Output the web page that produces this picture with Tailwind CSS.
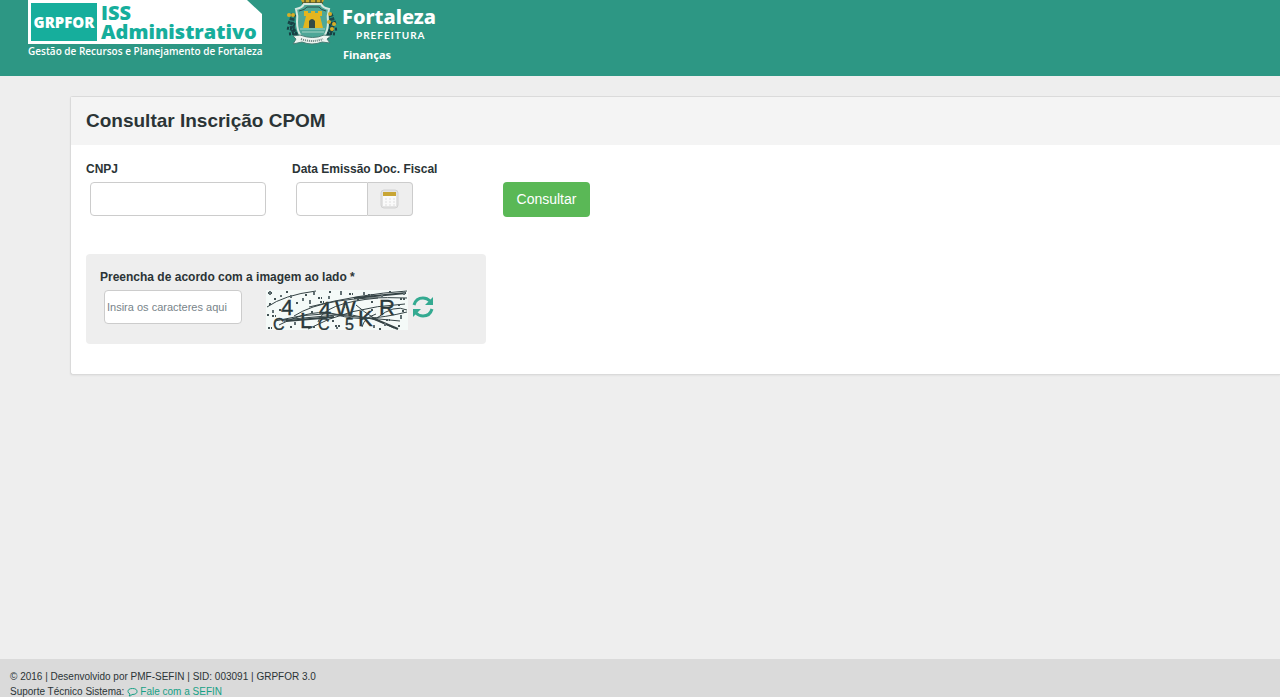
<!DOCTYPE html>
<html lang="pt-BR">
<head>
    <meta charset="UTF-8">
    <meta name="viewport" content="width=device-width, initial-scale=1.0">
    <title>Consultar Inscrição CPOM</title>
    <script src="https://cdn.jsdelivr.net/npm/@tailwindcss/browser@4"></script>
</head>
<body class="min-h-screen flex flex-col overflow-x-hidden bg-[#eeeeee] text-[#2b3436] font-['Liberation_Sans',Arial,sans-serif]">
    <header class="bg-[#2d9784] text-white h-[76px] flex items-start pl-7 gap-6 shrink-0">
        <!-- GRPFOR logo -->
        <div class="w-[234px] font-['Open_Sans',sans-serif]">
            <div class="flex h-11 bg-white p-[3px] gap-1 [clip-path:polygon(0_0,219px_0,100%_14px,100%_100%,0_100%)]">
                <div class="w-[66px] bg-[#16ae9c] flex items-center justify-center text-[15px] font-extrabold">GRPFOR</div>
                <div class="text-[#16ae9c] text-xl leading-[19px] font-extrabold">
                    <div>ISS</div>
                    <div>Administrativo</div>
                </div>
            </div>
            <p class="text-[10px] leading-[15px] font-semibold whitespace-nowrap">Gestão de Recursos e Planejamento de Fortaleza</p>
        </div>

        <!-- Prefeitura logo -->
        <div class="flex gap-1">
            <svg class="w-[52px] h-[46px] shrink-0" viewBox="0 0 52 46" fill="none">
                <path d="M15 0l2 4h19l2-4" fill="#c8a52c" />
                <path d="M16 3h21M19 0v4M24 0v4M30 0v4M35 0v4" stroke="#4f5630" stroke-width="1.500" />
                <path d="M8 14q-6 11 4 24M44 14q6 12-4 24" stroke="#1c4a4c" stroke-width="5" stroke-dasharray="3 1" />
                <path d="M2 22l7 3M1 28l8 2M3 34l8-1M49 34l-8-1M51 29l-8 1M50 22l-7 3" stroke="#173f43" stroke-width="3" stroke-dasharray="2 1" />
                <path d="M10 9q6-1 8-5h17q2 4 8 5-2 7-1 13 0 9-4 14-6 3-11 3-6 0-12-3-4-5-4-14 1-6-1-13z" fill="#4ea797" stroke="#d7e8df" stroke-width="2" />
                <path d="M13 11q6-1 8-4h12q2 3 7 4" stroke="#284d4b" />
                <path d="M14 29h25M16 32h22" stroke="#a5d2c4" />
                <path d="M17 28l3-12h-2v-5h4v2h3v-2h4v2h3v-2h4v5h-2l3 12z" fill="#e4b51e" />
                <path d="M23 28v-7q3-4 6 0v7z" fill="#344b45" />
                <g fill="#d7ae27">
                    <circle cx="3" cy="15" r="2" /><circle cx="7" cy="15" r="2" />
                    <circle cx="44" cy="14" r="2" /><circle cx="43" cy="22" r="2" />
                    <circle cx="48" cy="24" r="2" /><circle cx="46" cy="29" r="2" />
                </g>
                <path d="M7 36l7-1q13 5 24 0l7 1-4 3 3 4-8-1q-10 4-20 0l-9 2 3-5z" fill="#eef4f0" stroke="#497d75" />
                <path d="M15 39q11 4 22 0" stroke="#667f7b" stroke-width="2" stroke-dasharray="1 1" />
            </svg>
            <div>
                <p class="font-['Noto_Sans',sans-serif] font-extrabold text-xl leading-6 pt-[5px]">Fortaleza</p>
                <p class="font-['Lato',sans-serif] font-bold text-[10px] leading-3 tracking-widest pl-[14px]">PREFEITURA</p>
                <p class="font-['Noto_Sans',sans-serif] font-bold text-[11px] leading-4 pt-[6px] pl-px">Finanças</p>
            </div>
        </div>
    </header>

    <main class="grow pt-5 pl-[70px]">
        <form class="bg-white border border-r-0 border-[#dadada] rounded-l-[3px] shadow-xs">
            <div class="bg-[#f4f4f4] h-12 px-[15px] flex items-center">
                <h1 class="text-[19px] leading-6 font-bold">Consultar Inscrição CPOM</h1>
            </div>

            <div class="px-[15px] pt-4 pb-[30px]">
                <div class="flex items-start">
                    <div class="w-[206px]">
                        <label for="cnpj" class="block text-[12px] leading-4 font-bold">CNPJ</label>
                        <input id="cnpj" type="text" class="block mt-[5px] ml-1 w-44 h-[34px] bg-white border border-[#cccccc] rounded px-2 text-xs">
                    </div>
                    <div class="w-[211px]">
                        <label for="data-emissao" class="block text-[12px] leading-4 font-bold">Data Emissão Doc. Fiscal</label>
                        <div class="flex mt-[5px] ml-1">
                            <input id="data-emissao" type="text" class="w-[72px] h-[34px] bg-white border border-[#cccccc] rounded-l px-2 text-xs">
                            <button type="button" aria-label="Abrir calendário" class="w-[45px] h-[34px] bg-[#eeeeee] border border-l-0 border-[#cccccc] rounded-r flex items-center justify-center">
                                <svg class="w-5 h-5" viewBox="0 0 20 20">
                                    <rect x="1" y="1" width="17" height="18" rx="3" fill="#e3e3e3" stroke="#d2d2d2" />
                                    <path d="M3 3h13v14H3z" fill="#fafafa" />
                                    <path d="M3 3h13v4H3z" fill="#c8a534" />
                                    <path d="M5 10h2M9 10h2M13 10h2M5 13h2M9 13h2M13 13h2M5 16h2M9 16h2M13 16h2" stroke="#dedede" />
                                </svg>
                            </button>
                        </div>
                    </div>
                    <button type="submit" class="mt-[21px] w-[87px] h-[35px] bg-[#5ab856] rounded text-white text-[14px]">Consultar</button>
                </div>

                <div class="mt-[37px] w-[400px] h-[90px] bg-[#eeeeee] rounded px-[14px] pt-[15px]">
                    <label for="captcha" class="block text-[12px] leading-4 font-bold">Preencha de acordo com a imagem ao lado *</label>
                    <div class="flex mt-[5px] pl-1">
                        <input id="captcha" type="text" placeholder="Insira os caracteres aqui" class="w-[138px] h-[34px] bg-white border border-[#cccccc] rounded px-[2px] text-[11px] placeholder:text-[#78848a]">
                        <svg class="ml-6 w-[142px] h-10" viewBox="0 0 142 40" fill="none" role="img" aria-label="Imagem com caracteres">
                            <rect width="142" height="40" fill="#f4faf8" />
                            <g fill="#29383a" stroke="#29383a" stroke-width="0.4" font-family="Liberation Sans, sans-serif" font-size="22">
                                <text x="15" y="25">4</text>
                                <text x="53" y="27">4</text>
                                <text x="69" y="26">W</text>
                                <text x="113" y="25">R</text>
                                <text x="7" y="40" font-size="16">C</text>
                                <text x="34" y="38">L</text>
                                <text x="52" y="40" font-size="16">C</text>
                                <text x="79" y="40" font-size="16">5</text>
                                <text x="92" y="36">K</text>
                            </g>
                            <g stroke="#344345">
                                <path d="M1 17Q18 5 50 1M13 35Q48 17 72 25T141 22M28 26Q60 5 141 8M52 32Q57 13 112 8M9 31Q63 17 111 30M43 17Q94 4 141 1M111 28Q128 14 141 20M42 39Q82 17 139 14M90 15Q106 29 128 38M15 30L71 25L134 31M96 37Q98 28 110 24" />
                                <path d="M20 31L68 27M88 8L140 3M106 28L132 39" stroke-width="2" />
                            </g>
                            <path d="M2 3h4M20 2h2M39 5h3M52 8h4M63 2h3M83 4h4M102 5h5M123 2h3M8 9h2M30 13h3M54 12h4M91 10h3M105 12h3M134 9h5M3 14h2M13 20h4M45 22h3M77 17h4M132 15h2M136 21h3M6 26h4M24 37h3M66 31h3M105 20h3M120 30h4M132 36h3M2 38h4M47 37h3M69 36h5M113 39h3M1 25h2" stroke="#435355" stroke-width="2" stroke-dasharray="2 1" />
                            <path d="M4 1v4M15 5v2M25 5v3M37 8v3M48 2v3M75 1v4M98 2v3M116 5v3M138 1v4M7 20v3M29 32v3M44 10v4M71 37v2M108 35v3M135 25v4M19 30v2M63 6v3M119 33v3" stroke="#617073" stroke-width="2" />
                        </svg>
                        <button type="button" aria-label="Atualizar imagem" class="ml-1 mt-[6px] w-[22px] h-[22px] text-[#34aa91]">
                            <svg class="w-full h-full" viewBox="0 0 22 22" fill="none">
                                <path d="M2 9Q4 2 11 2q4 0 7 3M20 13q-2 7-9 7-4 0-7-3" stroke="currentColor" stroke-width="3" />
                                <path d="M21 1v8h-8zM1 21v-8h8z" fill="currentColor" />
                            </svg>
                        </button>
                    </div>
                </div>
            </div>
        </form>
    </main>

    <footer class="bg-[#dadada] h-[38px] shrink-0 overflow-hidden pt-[10px] px-[10px] text-[10px] leading-[15px]">
        <p>© 2016 | Desenvolvido por PMF-SEFIN | SID: 003091 | GRPFOR 3.0</p>
        <p class="flex items-center">Suporte Técnico Sistema:
            <a href="#" class="ml-[3px] flex items-center gap-[2px] text-[#16a085]">
                <svg class="w-[11px] h-[10px]" viewBox="0 0 11 10" fill="none" stroke="currentColor">
                    <path d="M3 7Q1 6 1 4.500Q1 1.500 5.500 1.500T10 4.500T5 7.500Q4 9 2 9Q3 8 3 7z" />
                </svg>
                Fale com a SEFIN
            </a>
        </p>
    </footer>
</body>
</html>
